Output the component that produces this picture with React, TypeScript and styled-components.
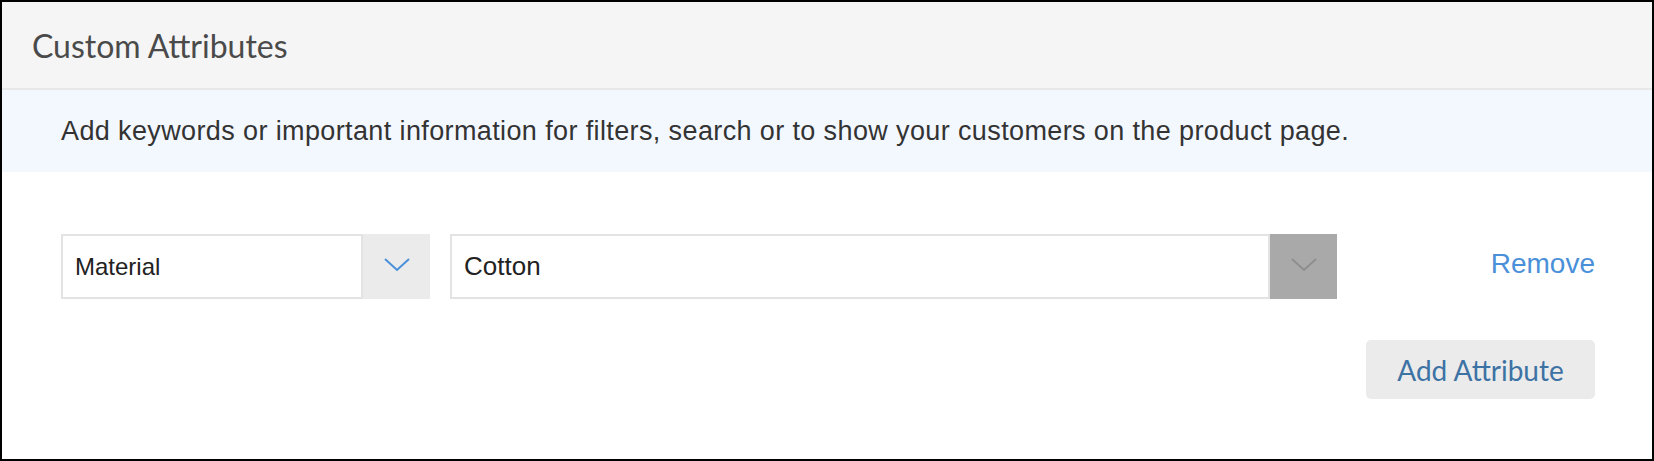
import styled, { createGlobalStyle } from 'styled-components'

const GlobalStyle = createGlobalStyle`
  body {
    margin: 0;
    background: #fff;
  }
  * {
    box-sizing: border-box;
  }
`

const Panel = styled.div`
  width: 1654px;
  height: 461px;
  border: 2px solid #000;
  background: #fff;
  display: flex;
  flex-direction: column;
`

const Header = styled.div`
  height: 88px;
  background: #f5f5f5;
  border-bottom: 2px solid #e8e8e8;
  display: flex;
  align-items: center;
  padding-left: 30px;
`

const Title = styled.h2`
  margin: 0;
  font-family: Lato, 'Open Sans', sans-serif;
  font-weight: 400;
  font-size: 32px;
  color: #4a4a4a;
`

const Notice = styled.div`
  height: 82px;
  background: #f3f8fe;
  display: flex;
  align-items: center;
  padding-left: 59px;
  font-family: 'Liberation Sans', Arial, sans-serif;
  font-size: 27px;
  letter-spacing: 0.38px;
  color: #333;
`

const Body = styled.div`
  padding: 62px 57px 0 59px;
  display: flex;
  flex-direction: column;
`

const Row = styled.div`
  display: flex;
  align-items: center;
`

const Select = styled.div<{ $width: number }>`
  width: ${(p) => p.$width}px;
  height: 65px;
  display: flex;
  margin-right: 20px;
`

const Field = styled.div<{ $size: number }>`
  flex: 1;
  border: 2px solid #e3e3e3;
  display: flex;
  align-items: center;
  padding-left: 12px;
  font-family: 'Liberation Sans', Arial, sans-serif;
  font-size: ${(p) => p.$size}px;
  color: #222;
`

const Toggle = styled.div<{ $dark?: boolean }>`
  width: 67px;
  background: ${(p) => (p.$dark ? '#a9a9a9' : '#ebebeb')};
  display: flex;
  align-items: center;
  justify-content: center;
  padding-bottom: 4px;
`

const RemoveLink = styled.a`
  margin-left: auto;
  margin-top: -5px;
  font-family: 'Liberation Sans', Arial, sans-serif;
  font-size: 28px;
  color: #4a90d9;
  cursor: pointer;
`

const Actions = styled.div`
  display: flex;
  justify-content: flex-end;
  margin-top: 41px;
`

const Button = styled.button`
  width: 229px;
  height: 59px;
  border: none;
  border-radius: 5px;
  background: #ebebeb;
  font-family: Lato, 'Open Sans', sans-serif;
  font-size: 28px;
  color: #3d72a4;
  cursor: pointer;
`

const Chevron = ({ color }: { color: string }) => (
  <svg width="26" height="14" viewBox="0 0 26 14">
    <polyline points="1,1 13,12 25,1" fill="none" stroke={color} strokeWidth="2" />
  </svg>
)

const App = () => {
  return (
    <>
      <GlobalStyle />
      <Panel>
        <Header>
          <Title>Custom Attributes</Title>
        </Header>
        <Notice>
          Add keywords or important information for filters, search or to show your customers on the product page.
        </Notice>
        <Body>
          <Row>
            <Select $width={369}>
              <Field $size={24}>Material</Field>
              <Toggle>
                <Chevron color="#4a90d9" />
              </Toggle>
            </Select>
            <Select $width={887}>
              <Field $size={26}>Cotton</Field>
              <Toggle $dark>
                <Chevron color="#8e8e8e" />
              </Toggle>
            </Select>
            <RemoveLink>Remove</RemoveLink>
          </Row>
          <Actions>
            <Button>Add Attribute</Button>
          </Actions>
        </Body>
      </Panel>
    </>
  )
}

export default App
